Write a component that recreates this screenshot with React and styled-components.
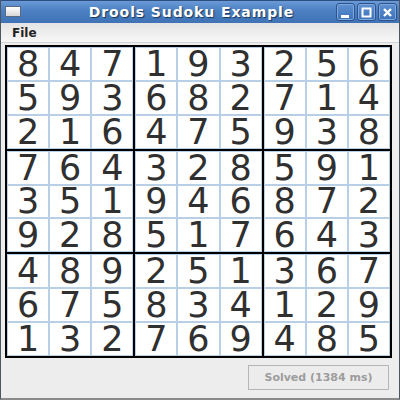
import styled, { createGlobalStyle } from 'styled-components';

const GlobalStyle = createGlobalStyle`
  html, body {
    margin: 0;
    padding: 0;
    background: #ededed;
  }
  * {
    box-sizing: border-box;
  }
`;

const puzzle = [
  '847193256',
  '593682714',
  '216475938',
  '764328591',
  '351946872',
  '928517643',
  '489251367',
  '675834129',
  '132769485',
];

const Window = styled.div`
  width: 400px;
  height: 400px;
  display: flex;
  flex-direction: column;
  background: #ededed;
  border-left: 1px solid #4d5563;
  border-right: 1px solid #4d5563;
  border-bottom: 2px solid #8a8a8a;
  font-family: 'DejaVu Sans', Verdana, sans-serif;
`;

const TitleBar = styled.div`
  height: 23px;
  flex-shrink: 0;
  display: flex;
  align-items: center;
  padding: 0 2px 0 4px;
  background: linear-gradient(#6b9ad6, #4a7fc2 45%, #3f73b6);
  border-top: 1px solid #2c4f80;
`;

const WindowIcon = styled.div`
  width: 16px;
  height: 11px;
  margin-top: -2px;
  border: 1px solid #5a6a80;
  background: linear-gradient(#ffffff, #d7d7d7);
`;

const Title = styled.div`
  flex: 1;
  text-align: center;
  color: #fff;
  font-weight: bold;
  font-size: 14px;
  letter-spacing: 0.9px;
  padding-left: 26px;
  text-shadow: 1px 1px 1px #1c3659;
`;

const Controls = styled.div`
  display: flex;
  gap: 2px;
`;

const ControlButton = styled.div`
  width: 19px;
  height: 18px;
  display: flex;
  align-items: center;
  justify-content: center;
  border: 1px solid #2d5289;
  border-radius: 3px;
  background: linear-gradient(#5f91d2, #3d72b8);
  box-shadow: inset 0 0 0 1px #7ea8de;
`;

const MenuBar = styled.div`
  height: 20px;
  flex-shrink: 0;
  display: flex;
  align-items: center;
  padding-left: 11px;
  background: linear-gradient(#e4e4e4, #f7f7f7);
  border-bottom: 1px solid #d3d3d3;
`;

const MenuItem = styled.span`
  font-size: 12px;
  font-weight: bold;
  color: #222;
`;

const Content = styled.div`
  flex: 1;
  display: flex;
  flex-direction: column;
  padding: 2px 0 0 4px;
`;

const Board = styled.div`
  width: 387px;
  height: 313px;
  display: grid;
  grid-template-columns: repeat(3, 1fr);
  grid-template-rows: repeat(3, 1fr);
  gap: 2px;
  background: #000;
  border: 2px solid #000;
`;

const Box = styled.div`
  display: grid;
  grid-template-columns: repeat(3, 1fr);
  grid-template-rows: repeat(3, 1fr);
  min-width: 0;
  min-height: 0;
`;

const Cell = styled.div`
  display: flex;
  align-items: center;
  justify-content: center;
  background: #fff;
  border: 1px solid #b9cfe6;
  color: #303030;
  font-size: 35px;
  line-height: 30px;
  min-height: 0;
`;

const Footer = styled.div`
  display: flex;
  justify-content: flex-end;
  padding: 7px 10px 0 0;
`;

const StatusButton = styled.button`
  width: 141px;
  height: 25px;
  border: 1px solid #b6b6b6;
  background: #ececec;
  color: #9d9d9d;
  font-family: 'DejaVu Sans', Verdana, sans-serif;
  font-size: 11px;
  font-weight: bold;
  padding: 0;
`;

function App() {
  const boxes = [0, 1, 2, 3, 4, 5, 6, 7, 8];
  return (
    <>
      <GlobalStyle />
      <Window>
        <TitleBar>
          <WindowIcon />
          <Title>Drools Sudoku Example</Title>
          <Controls>
            <ControlButton>
              <svg width="11" height="11" viewBox="0 0 11 11">
                <rect x="1" y="8" width="8" height="3" fill="#fff" />
              </svg>
            </ControlButton>
            <ControlButton>
              <svg width="11" height="11" viewBox="0 0 11 11">
                <rect x="1.5" y="1.5" width="8" height="8" fill="none" stroke="#fff" strokeWidth="2" />
              </svg>
            </ControlButton>
            <ControlButton>
              <svg width="11" height="11" viewBox="0 0 11 11">
                <path d="M2 2 L9 9 M9 2 L2 9" stroke="#fff" strokeWidth="2.4" />
              </svg>
            </ControlButton>
          </Controls>
        </TitleBar>
        <MenuBar>
          <MenuItem>File</MenuItem>
        </MenuBar>
        <Content>
          <Board>
            {boxes.map(b => {
              const br = Math.floor(b / 3) * 3;
              const bc = (b % 3) * 3;
              return (
                <Box key={b}>
                  {[0, 1, 2].flatMap(r =>
                    [0, 1, 2].map(c => (
                      <Cell key={`${r}-${c}`}>{puzzle[br + r][bc + c]}</Cell>
                    ))
                  )}
                </Box>
              );
            })}
          </Board>
          <Footer>
            <StatusButton disabled>Solved (1384 ms)</StatusButton>
          </Footer>
        </Content>
      </Window>
    </>
  );
}

export default App;
